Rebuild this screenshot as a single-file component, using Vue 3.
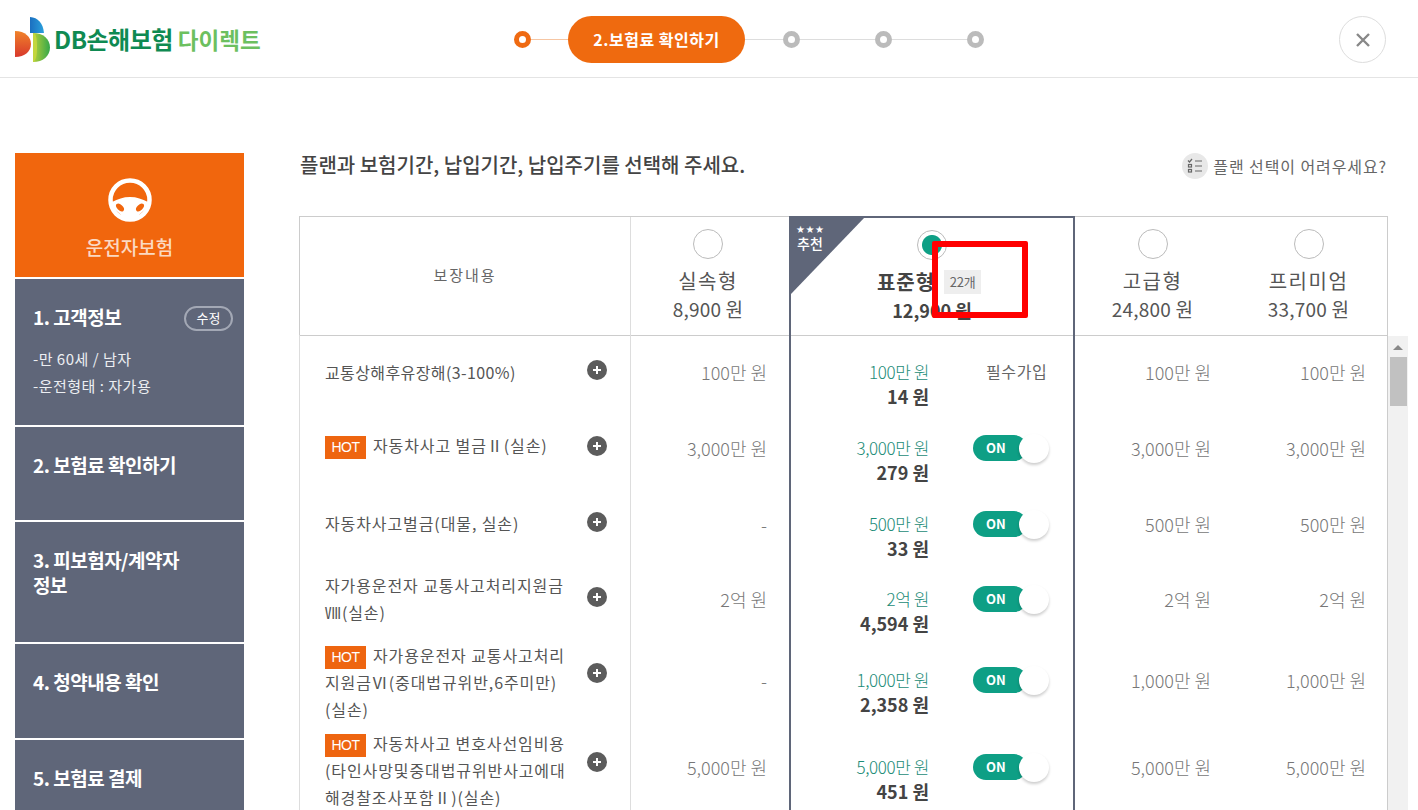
<script setup>
const sideItems = [
  { id: 1, lines: ['1. 고객정보'], height: 146, edit: true, info: ['-만 60세 / 남자', '-운전형태 : 자가용'] },
  { id: 2, lines: ['2. 보험료 확인하기'], height: 93 },
  { id: 3, lines: ['3. 피보험자/계약자', '정보'], height: 120 },
  { id: 4, lines: ['4. 청약내용 확인'], height: 94 },
  { id: 5, lines: ['5. 보험료 결제'], height: 90 }
]

const plans = [
  { name: '고급형', price: '24,800 원' },
  { name: '프리미엄', price: '33,700 원' }
]

// labelUp / plusUp: the original cells are not quite centred, row by row
const rows = [
  { height: 76, hot: false, tight: true, labelUp: -2, plusUp: -6, label: ['교통상해후유장해(3-100%)'], basic: '100만 원', amount: '100만 원', premium: '14 원', required: true, other: '100만 원' },
  { height: 76, hot: true, labelUp: -8, plusUp: -6, label: ['자동차사고 벌금Ⅱ(실손)'], basic: '3,000만 원', amount: '3,000만 원', premium: '279 원', other: '3,000만 원' },
  { height: 76, hot: false, labelUp: -4, plusUp: -6, label: ['자동차사고벌금(대물, 실손)'], basic: '-', amount: '500만 원', premium: '33 원', other: '500만 원' },
  { height: 74, hot: false, labelUp: -2, plusUp: -6, label: ['자가용운전자 교통사고처리지원금', 'Ⅷ(실손)'], basic: '2억 원', amount: '2억 원', premium: '4,594 원', other: '2억 원' },
  { height: 88, hot: true, labelUp: 2, plusUp: -16, label: ['자가용운전자 교통사고처리', '지원금Ⅵ(중대법규위반,6주미만)', '(실손)'], basic: '-', amount: '1,000만 원', premium: '2,358 원', other: '1,000만 원' },
  { height: 86, hot: true, labelUp: 4, plusUp: -12, label: ['자동차사고 변호사선임비용', '(타인사망및중대법규위반사고에대', '해경찰조사포함Ⅱ)(실손)'], basic: '5,000만 원', amount: '5,000만 원', premium: '451 원', other: '5,000만 원' }
]
</script>

<template>
  <div class="page">
    <header class="top">
      <div class="logo">
        <svg class="logo-mark" width="36" height="46" viewBox="0 0 36 46">
          <defs>
            <linearGradient id="logoRed" x1="0" y1="0" x2="0" y2="1">
              <stop offset="0" stop-color="#f0832a" />
              <stop offset="1" stop-color="#d8382c" />
            </linearGradient>
            <linearGradient id="logoGreen" x1="0" y1="0" x2="1" y2="0">
              <stop offset="0" stop-color="#b5cf3a" />
              <stop offset="1" stop-color="#35a84a" />
            </linearGradient>
            <linearGradient id="logoBlue" x1="0" y1="0" x2="1" y2="0">
              <stop offset="0" stop-color="#1b6fc0" />
              <stop offset="1" stop-color="#2aa0dc" />
            </linearGradient>
          </defs>
          <path d="M15 0c8 .5 13 6 14 16H15z" fill="url(#logoBlue)" />
          <path d="M0 14c10 0 16 6 16 13S10 40 0 40z" fill="url(#logoRed)" />
          <path d="M18 16c10 0 17 6 17 14.500S28 45 18 45z" fill="url(#logoGreen)" />
          <path d="M18 16c3 0 4 6 4 14s-1 14-4 15z" fill="#c3d63d" />
        </svg>
        <span class="logo-main">DB손해보험</span>
        <span class="logo-sub">다이렉트</span>
      </div>

      <div class="stepper">
        <span class="dot dot-on"></span>
        <span class="line line-on"></span>
        <span class="step-pill">2.보험료 확인하기</span>
        <span class="line"></span>
        <span class="dot"></span>
        <span class="line line-long"></span>
        <span class="dot"></span>
        <span class="line line-long"></span>
        <span class="dot"></span>
      </div>

      <button class="close" aria-label="닫기">
        <svg width="16" height="16" viewBox="0 0 16 16">
          <path d="M2 2l12 12M14 2L2 14" stroke="#888" stroke-width="2.400" fill="none" />
        </svg>
      </button>
    </header>

    <div class="content">
      <aside class="side">
        <div class="side-head">
          <svg width="44" height="44" viewBox="0 0 44 44">
            <circle cx="22" cy="22" r="19.500" fill="none" stroke="#fff" stroke-width="4.500" />
            <path d="M4 24c6-3 11-5 18-5s12 2 18 5l-1 6-7 6-5 5H17l-5-5-7-6z" fill="#fff" />
            <ellipse cx="12" cy="29.500" rx="2.800" ry="4.800" transform="rotate(-45 12 29.500)" fill="#f1660d" />
            <ellipse cx="32" cy="29.500" rx="2.800" ry="4.800" transform="rotate(45 32 29.500)" fill="#f1660d" />
          </svg>
          <span class="side-title">운전자보험</span>
        </div>
        <div v-for="item in sideItems" :key="item.id" class="side-item" :style="{ height: item.height + 'px' }">
          <div class="side-row">
            <div class="side-name">
              <div v-for="line in item.lines" :key="line">{{ line }}</div>
            </div>
            <span v-if="item.edit" class="edit">수정</span>
          </div>
          <div v-if="item.info" class="side-info">
            <div v-for="line in item.info" :key="line">{{ line }}</div>
          </div>
        </div>
      </aside>

      <main class="main">
        <div class="title-row">
          <h1>플랜과 보험기간, 납입기간, 납입주기를 선택해 주세요.</h1>
          <div class="help">
            <span class="help-icon">
              <svg width="16" height="16" viewBox="0 0 16 16" fill="none" stroke="#666" stroke-width="1.200">
                <path d="M1 2.500l1.500 1.500L5 1" />
                <rect x="1.500" y="6.500" width="3" height="2.500" />
                <rect x="1.500" y="11.500" width="3" height="2.500" />
                <path d="M8 3h7M8 8h7M8 13h7" />
              </svg>
            </span>
            <span>플랜 선택이 어려우세요?</span>
          </div>
        </div>

        <div class="thead">
          <div class="th-label">보장내용</div>
          <div class="th-plan th-basic">
            <span class="radio"></span>
            <div class="plan-name">실속형</div>
            <div class="plan-price">8,900 원</div>
          </div>
          <div class="th-plan th-std">
            <div class="ribbon"></div>
            <div class="ribbon-text">
              <div class="stars">★★★</div>
              <div>추천</div>
            </div>
            <span class="radio radio-on"></span>
            <div class="plan-name std-name">표준형<span class="count">22개</span></div>
            <div class="plan-price std-price">12,900 원</div>
            <div class="red-frame"></div>
          </div>
          <div v-for="plan in plans" :key="plan.name" class="th-plan">
            <span class="radio"></span>
            <div class="plan-name">{{ plan.name }}</div>
            <div class="plan-price">{{ plan.price }}</div>
          </div>
        </div>

        <div class="body-wrap">
          <div class="tbody">
            <div v-for="row in rows" :key="row.label[0]" class="tr" :style="{ height: row.height + 'px' }">
              <div class="td-label">
                <div class="label-text" :class="{ tight: row.tight }" :style="{ marginTop: row.labelUp + 'px' }">
                  <div v-for="(line, i) in row.label" :key="line">
                    <span v-if="row.hot && i === 0" class="hot">HOT</span>{{ line }}
                  </div>
                </div>
                <span class="plus" :style="{ marginTop: row.plusUp + 'px' }">
                  <svg width="10" height="10" viewBox="0 0 10 10"><path d="M5 1v8M1 5h8" stroke="#fff" stroke-width="2" /></svg>
                </span>
              </div>
              <div class="td-val td-basic">{{ row.basic }}</div>
              <div class="td-std">
                <div class="std-vals">
                  <div class="std-amount">{{ row.amount }}</div>
                  <div class="std-premium">{{ row.premium }}</div>
                </div>
                <span v-if="row.required" class="required">필수가입</span>
                <span v-else class="toggle">
                  <span class="toggle-on">ON</span>
                  <span class="knob"></span>
                </span>
              </div>
              <div class="td-val">{{ row.other }}</div>
              <div class="td-val">{{ row.other }}</div>
            </div>
          </div>
          <div class="scrollbar">
            <span class="arrow"></span>
            <span class="thumb"></span>
          </div>
        </div>
      </main>
    </div>
  </div>
</template>

<style>
html, body {
  margin: 0;
  background: #fff;
}
</style>

<style scoped>
* {
  box-sizing: border-box;
}

.page {
  width: 1418px;
  height: 810px;
  overflow: hidden;
  background: #fff;
  font-family: "Noto Sans CJK KR", "Noto Sans", sans-serif;
  color: #555;
}

.top {
  position: relative;
  height: 78px;
  display: flex;
  align-items: center;
  padding: 0 32px 0 15px;
  border-bottom: 1px solid #e4e4e4;
}

.logo {
  width: 499px;
  display: flex;
  align-items: center;
  font-weight: 700;
  font-size: 24px;
  letter-spacing: -0.500px;
  white-space: nowrap;
}

.logo-mark {
  flex: none;
  margin: 2px 3px 0 0;
}

.logo-main {
  color: #0f8a52;
}

.logo-sub {
  margin-left: 5px;
  color: #6cc05f;
  font-size: 22.500px;
  letter-spacing: 0;
}

.stepper {
  display: flex;
  align-items: center;
  margin-top: 2px;
}

.dot {
  flex: none;
  width: 17px;
  height: 17px;
  border-radius: 50%;
  border: 5px solid #bbb;
  background: #fff;
}

.dot-on {
  border-color: #ef6a12;
}

.line {
  flex: none;
  width: 38px;
  height: 1px;
  background: #ddd;
}

.line-on {
  width: 37px;
  background: #f6c6a3;
}

.line-long {
  width: 75px;
}

.step-pill {
  flex: none;
  width: 177px;
  height: 47px;
  border-radius: 24px;
  background: #ef6a0f;
  color: #fff;
  font-size: 16px;
  font-weight: 700;
  line-height: 47px;
  letter-spacing: 0.500px;
  text-align: center;
  white-space: nowrap;
}

.close {
  margin: 2px 0 0 auto;
  width: 47px;
  height: 47px;
  border-radius: 50%;
  border: 1px solid #ddd;
  background: #fff;
  display: flex;
  align-items: center;
  justify-content: center;
  padding: 0;
}

.content {
  display: flex;
  padding: 75px 0 0 15px;
}

.side {
  flex: none;
  width: 229px;
  display: flex;
  flex-direction: column;
  gap: 2px;
}

.side-head {
  height: 124px;
  background: #f1660d;
  display: flex;
  flex-direction: column;
  align-items: center;
  padding-top: 25px;
}

.side-title {
  margin-top: 12px;
  color: #fbd9c2;
  font-size: 19px;
  font-weight: 500;
  line-height: 26px;
}

.side-item {
  flex: none;
  background: #5f6679;
  color: #fff;
  padding: 25px 11px 0 18px;
}

.side-row {
  display: flex;
  justify-content: space-between;
  align-items: flex-start;
}

.side-name {
  font-size: 19px;
  font-weight: 700;
  line-height: 25px;
  letter-spacing: -0.500px;
}

.edit {
  width: 49px;
  height: 25px;
  margin-top: 2px;
  border: 2px solid #a3a8b5;
  border-radius: 13px;
  font-size: 13px;
  line-height: 20px;
  text-align: center;
}

.side-info {
  margin-top: 14px;
  font-size: 15px;
  line-height: 27px;
  color: #eceef2;
  letter-spacing: 0.500px;
}

.main {
  flex: none;
  margin-left: 55px;
  width: 1109px;
}

.title-row {
  width: 1088px;
  height: 63px;
  display: flex;
  justify-content: space-between;
  align-items: flex-start;
}

h1 {
  margin: -2px 0 0;
  padding-left: 1px;
  font-size: 20px;
  font-weight: 500;
  line-height: 27px;
  color: #444;
}

.help {
  display: flex;
  align-items: center;
  height: 26px;
  gap: 5px;
  font-size: 16px;
  letter-spacing: 0.900px;
  color: #666;
  white-space: nowrap;
}

.help-icon {
  width: 26px;
  height: 26px;
  border-radius: 50%;
  background: #e8e8e8;
  display: flex;
  align-items: center;
  justify-content: center;
}

.thead {
  width: 1089px;
  height: 120px;
  display: grid;
  grid-template-columns: 331px 158px 286px 155px 157px;
  border: 1px solid #ccc;
}

.th-label {
  border-right: 1px solid #ddd;
  text-align: center;
  padding-top: 47px;
  font-size: 15px;
  line-height: 22px;
  letter-spacing: 2px;
  color: #666;
}

.th-plan {
  position: relative;
  display: flex;
  flex-direction: column;
  align-items: center;
  padding-top: 12px;
  color: #555;
}

.th-basic {
  padding-right: 4px;
}

.th-std {
  border: 2px solid #5f6679;
  border-bottom: 0;
  margin-top: -1px;
  height: 119px;
}

.radio {
  flex: none;
  width: 30px;
  height: 30px;
  border-radius: 50%;
  border: 1px solid #bbb;
  background: #fff;
}

.radio-on {
  border: 1px solid #bbb;
  background: radial-gradient(circle, #0e9f85 0 9.500px, #fff 10.500px);
}

.plan-name {
  margin-top: 8px;
  font-size: 20px;
  line-height: 28px;
  letter-spacing: 1.500px;
  white-space: nowrap;
}

.plan-price {
  font-size: 19px;
  line-height: 28px;
  white-space: nowrap;
  letter-spacing: 0.200px;
}

.std-name {
  padding-right: 6px;
  font-weight: 700;
  letter-spacing: 1px;
  color: #444;
  display: flex;
  align-items: center;
}

.count {
  margin-left: 9px;
  width: 37px;
  height: 24px;
  background: #eee;
  font-size: 13px;
  font-weight: 400;
  line-height: 24px;
  text-align: center;
  color: #666;
  letter-spacing: -0.300px;
}

.std-price {
  font-weight: 700;
  color: #444;
  font-size: 18px;
  letter-spacing: 0;
}

.ribbon {
  position: absolute;
  left: 0;
  top: -1px;
  width: 74px;
  height: 77px;
  background: #5f6679;
  clip-path: polygon(0 0, 100% 0, 0 100%);
}

.ribbon-text {
  position: absolute;
  left: 6px;
  top: 6px;
  color: #fff;
  font-size: 14px;
  font-weight: 500;
  line-height: 17px;
}

.stars {
  font-size: 10px;
  line-height: 11px;
  letter-spacing: 0.500px;
  margin-left: -1px;
  font-family: "DejaVu Sans", sans-serif;
}

.red-frame {
  position: absolute;
  left: 141px;
  top: 23px;
  width: 96px;
  height: 77px;
  border: 6px solid #f00;
  border-radius: 2px;
}

.body-wrap {
  display: flex;
  width: 1109px;
}

.tbody {
  width: 1089px;
  flex: none;
  margin-top: -1px;
  border-left: 1px solid #ddd;
  border-right: 1px solid #ccc;
}

.tr {
  display: grid;
  grid-template-columns: 331px 158px 286px 155px 157px;
}

.td-label {
  display: flex;
  align-items: center;
  justify-content: space-between;
  border-right: 1px solid #ddd;
  padding: 0 23px 0 25px;
  font-size: 16px;
  line-height: 27px;
  color: #555;
}

.label-text {
  width: 244px;
  white-space: nowrap;
  letter-spacing: 0.900px;
}

.tight {
  letter-spacing: 0.400px;
}

.hot {
  display: inline-block;
  width: 41px;
  height: 23px;
  margin-right: 7px;
  background: #ee6510;
  color: #fff;
  font-family: "Liberation Sans", sans-serif;
  font-size: 14px;
  line-height: 23px;
  letter-spacing: -0.500px;
  text-align: center;
  vertical-align: 0;
}

.plus {
  flex: none;
  width: 20px;
  height: 20px;
  border-radius: 50%;
  background: #5c5c5c;
  display: flex;
  align-items: center;
  justify-content: center;
}

.td-val {
  display: flex;
  align-items: center;
  justify-content: flex-end;
  padding: 0 21px 2px 0;
  font-size: 18px;
  font-weight: 300;
  color: #777;
}

.td-val:nth-child(4) {
  padding-right: 19px;
}

.td-basic {
  padding-right: 22px;
}

.td-std {
  display: flex;
  align-items: center;
  border-left: 2px solid #5f6679;
  border-right: 2px solid #5f6679;
}

.std-vals {
  flex: none;
  width: 138px;
  padding-top: 22px;
  text-align: right;
  font-size: 17px;
  line-height: 25px;
  letter-spacing: -0.400px;
}

.std-amount {
  color: #1c8c77;
  font-weight: 300;
}

.std-premium {
  color: #444;
  font-weight: 700;
  font-size: 18px;
  letter-spacing: 0;
}

.required {
  margin: 0 0 4px 57px;
  font-size: 16px;
  color: #666;
  white-space: nowrap;
  letter-spacing: 0.600px;
}

.toggle {
  position: relative;
  flex: none;
  width: 78px;
  height: 28px;
  margin-left: 44px;
}

.toggle-on {
  display: block;
  width: 54px;
  height: 26px;
  border-radius: 13px;
  background: #0e9f85;
  color: #fff;
  font-size: 13px;
  font-weight: 700;
  line-height: 25px;
  padding-left: 13px;
}

.knob {
  position: absolute;
  left: 46px;
  top: -1px;
  width: 30px;
  height: 29px;
  border-radius: 50%;
  background: #fff;
  box-shadow: 0 2px 3px rgba(0, 0, 0, 0.2);
}

.scrollbar {
  flex: none;
  width: 20px;
  background: #f1f1f1;
  padding-left: 2px;
}

.arrow {
  display: block;
  width: 0;
  height: 0;
  margin: 9px 0 0 3px;
  border: 5px solid transparent;
  border-top: 0;
  border-bottom: 5px solid #888;
}

.thumb {
  display: block;
  width: 17px;
  height: 49px;
  margin-top: 7px;
  background: #c1c1c1;
}
</style>
